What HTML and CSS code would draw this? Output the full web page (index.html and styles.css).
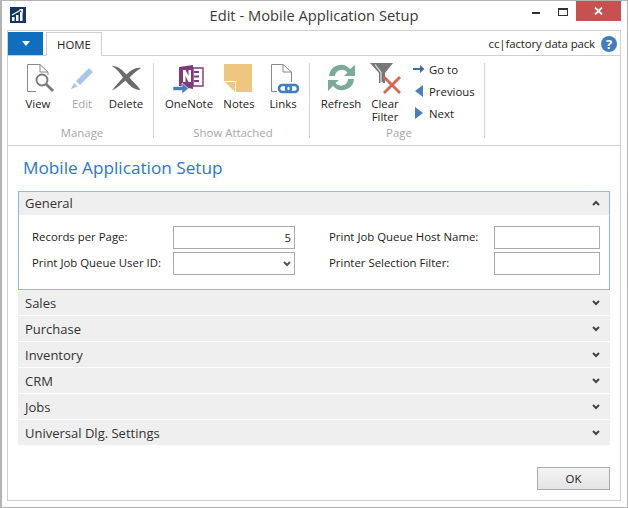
FILE: index.html
```html
<!DOCTYPE html>
<html lang="en">
<head>
    <meta charset="UTF-8">
    <title>Edit - Mobile Application Setup</title>
    <link rel="stylesheet" href="styles.css">
</head>
<body>
<div class="window">
    <header class="titlebar">
        <svg class="app-icon" width="16" height="16" viewBox="0 0 16 16">
            <rect width="16" height="16" fill="#14365f"/>
            <path d="M2 14V10H4.500V14ZM6 14V8H8.500V14ZM10 14V5H12.500V14Z" fill="#fff"/>
            <path d="M2 8L10 3.500" stroke="#fff" stroke-width="1.200" fill="none"/>
            <path d="M9 2H13V6Z" fill="#fff"/>
        </svg>
        <div class="title">Edit - Mobile Application Setup</div>
        <div class="win-controls">
            <svg class="win-min" width="8" height="2"><rect width="8" height="2" fill="#333"/></svg>
            <svg class="win-max" width="10" height="8"><rect x="0.500" y="0.500" width="9" height="7" fill="none" stroke="#333"/><rect width="10" height="2" fill="#333"/></svg>
            <div class="win-close">
                <svg width="9" height="8" viewBox="0 0 9 8"><path d="M1 0.500L8 7.500M8 0.500L1 7.500" stroke="#fff" stroke-width="1.800"/></svg>
            </div>
        </div>
    </header>

    <div class="panel">
        <div class="tabs">
            <button class="app-menu"><span class="caret"></span></button>
            <div class="tab">HOME</div>
            <div class="company">cc|factory data pack</div>
            <svg class="help" width="16" height="16" viewBox="0 0 16 16">
                <circle cx="8" cy="8" r="8" fill="#3f7fc1"/>
                <text x="8" y="12.500" text-anchor="middle" class="help-mark">?</text>
            </svg>
        </div>

        <div class="ribbon">
            <section class="group group-manage">
                <div class="group-items">
                    <div class="action w44">
                        <svg width="32" height="30" viewBox="0 0 32 30">
                            <path d="M5.500 28.500V1.500H18L26 9V12M18 1.500V9H26M5.500 28.500H14" fill="none" stroke="#8a8a8a"/>
                            <circle cx="20" cy="17" r="5.500" fill="#fff" stroke="#777" stroke-width="1.800"/>
                            <path d="M24 21L31 28" stroke="#777" stroke-width="2.600"/>
                        </svg>
                        <span>View</span>
                    </div>
                    <div class="action w44 off">
                        <svg width="30" height="30" viewBox="0 0 30 30">
                            <path d="M9 18L22 5L26 9L13 22Z" fill="#a9c6e3"/>
                            <path d="M7 20L10.500 23.500L4 26Z" fill="#a9c6e3"/>
                        </svg>
                        <span>Edit</span>
                    </div>
                    <div class="action w44">
                        <svg width="30" height="30" viewBox="0 0 30 30">
                            <path d="M1 3C8 3 12 8 15.500 11.500C20 7 25 4 30 5C25 8 21 12 18.500 14.500C22 19 26 22 29.500 27C23 27 18 22 14.500 17.500C10 21 6 25 1 27.500C4 23 9 18 12 14.500C9 10 6 6 1 3Z" fill="#6b6b6b"/>
                        </svg>
                        <span>Delete</span>
                    </div>
                </div>
                <div class="group-label">Manage</div>
            </section>

            <section class="group group-attached">
                <div class="group-items">
                    <div class="action w50">
                        <svg width="32" height="30" viewBox="0 0 32 30">
                            <path d="M6 4L20 2V26L6 23Z" fill="#80397b"/>
                            <path d="M20 5H30V23H20Z" fill="none" stroke="#80397b" stroke-width="1.400"/>
                            <path d="M21 8H26V10H21ZM21 12.500H26V14.500H21ZM21 17H26V19H21Z" fill="#80397b"/>
                            <path d="M10 19V7H12.500L15.500 13V7H18V19H15.500L12.500 13V19Z" fill="#fff"/>
                            <path d="M0 23.500H9V20L15.500 25.500L9 31V27.500H0Z" fill="#4a7fb5" stroke="#fff" stroke-width="0.600"/>
                        </svg>
                        <span>OneNote</span>
                    </div>
                    <div class="action w50">
                        <svg width="28" height="30" viewBox="1 0 28 30">
                            <path d="M0 1H28V29H11L0 18Z" fill="#edc77f"/>
                            <path d="M0.500 18.500H11.500V29" fill="none" stroke="#fff"/>
                        </svg>
                        <span>Notes</span>
                    </div>
                    <div class="action w38">
                        <svg width="30" height="30" viewBox="0 0 30 30">
                            <path d="M3.500 28.500V1.500H15L23.500 9V19M15 1.500V9H23.500M3.500 28.500H9" fill="none" stroke="#8a8a8a"/>
                            <rect x="11" y="22" width="12" height="7" rx="3.500" fill="#fff" stroke="#3f7fc1" stroke-width="2.600"/>
                            <rect x="18" y="22" width="12" height="7" rx="3.500" fill="none" stroke="#3f7fc1" stroke-width="2.600"/>
                        </svg>
                        <span>Links</span>
                    </div>
                </div>
                <div class="group-label">Show Attached</div>
            </section>

            <section class="group group-page">
                <div class="group-items">
                    <div class="action w44">
                        <svg width="30" height="30" viewBox="0 0 30 30">
                            <path d="M3 13A12 12 0 0 1 24 6L29 2V13H18L21.500 9.500A7 7 0 0 0 9 13Z" fill="#7bab98"/>
                            <path d="M28 16A12 12 0 0 1 7 23L2 28V17H13L9.500 20A7 7 0 0 0 22 16Z" fill="#7bab98"/>
                        </svg>
                        <span>Refresh</span>
                    </div>
                    <div class="action w44">
                        <svg width="34" height="30" viewBox="0 0 34 30">
                            <path d="M2 0H25L17 10V20H11V10Z" fill="#777"/>
                            <path d="M7 1.500L13 9.500V19.500H15" fill="none" stroke="#e4e4e4" stroke-width="1.200"/>
                            <path d="M16 14L32 30M32 14L16 30" stroke="#d8654c" stroke-width="2.800"/>
                        </svg>
                        <span>Clear<br>Filter</span>
                    </div>
                    <ul class="small-actions">
                        <li>
                            <svg width="12" height="10" viewBox="0 0 12 10"><path d="M0 4H7V1L11.500 5L7 9V6H0Z" fill="#3f6fa8"/></svg>
                            <span>Go to</span>
                        </li>
                        <li>
                            <svg width="12" height="14" viewBox="0 0 12 14"><path d="M10 1V13L2 7Z" fill="#4a7fb5"/></svg>
                            <span>Previous</span>
                        </li>
                        <li>
                            <svg width="12" height="14" viewBox="0 0 12 14"><path d="M2 1V13L10 7Z" fill="#4a7fb5"/></svg>
                            <span>Next</span>
                        </li>
                    </ul>
                </div>
                <div class="group-label">Page</div>
            </section>
        </div>

        <main class="content">
            <h1 class="page-title">Mobile Application Setup</h1>

            <section class="fasttab open">
                <div class="fasttab-head">
                    <span>General</span>
                    <svg class="chev" width="8" height="6" viewBox="0 0 8 6"><path d="M1 5L4 2L7 5" fill="none" stroke="#444" stroke-width="2"/></svg>
                </div>
                <div class="fields">
                    <div class="field-col">
                        <div class="field">
                            <label>Records per Page:</label>
                            <div class="input input-num">5</div>
                        </div>
                        <div class="field">
                            <label>Print Job Queue User ID:</label>
                            <div class="input input-select">
                                <svg class="chev" width="8" height="6" viewBox="0 0 8 6"><path d="M1 1L4 4L7 1" fill="none" stroke="#555" stroke-width="2"/></svg>
                            </div>
                        </div>
                    </div>
                    <div class="field-col col-right">
                        <div class="field">
                            <label>Print Job Queue Host Name:</label>
                            <div class="input"></div>
                        </div>
                        <div class="field">
                            <label>Printer Selection Filter:</label>
                            <div class="input"></div>
                        </div>
                    </div>
                </div>
            </section>

            <section class="fasttab"><div class="fasttab-head"><span>Sales</span><svg class="chev" width="8" height="6" viewBox="0 0 8 6"><path d="M1 1L4 4L7 1" fill="none" stroke="#444" stroke-width="2"/></svg></div></section>
            <section class="fasttab"><div class="fasttab-head"><span>Purchase</span><svg class="chev" width="8" height="6" viewBox="0 0 8 6"><path d="M1 1L4 4L7 1" fill="none" stroke="#444" stroke-width="2"/></svg></div></section>
            <section class="fasttab"><div class="fasttab-head"><span>Inventory</span><svg class="chev" width="8" height="6" viewBox="0 0 8 6"><path d="M1 1L4 4L7 1" fill="none" stroke="#444" stroke-width="2"/></svg></div></section>
            <section class="fasttab"><div class="fasttab-head"><span>CRM</span><svg class="chev" width="8" height="6" viewBox="0 0 8 6"><path d="M1 1L4 4L7 1" fill="none" stroke="#444" stroke-width="2"/></svg></div></section>
            <section class="fasttab"><div class="fasttab-head"><span>Jobs</span><svg class="chev" width="8" height="6" viewBox="0 0 8 6"><path d="M1 1L4 4L7 1" fill="none" stroke="#444" stroke-width="2"/></svg></div></section>
            <section class="fasttab"><div class="fasttab-head"><span>Universal Dlg. Settings</span><svg class="chev" width="8" height="6" viewBox="0 0 8 6"><path d="M1 1L4 4L7 1" fill="none" stroke="#444" stroke-width="2"/></svg></div></section>

            <div class="footer">
                <button class="ok">OK</button>
            </div>
        </main>
    </div>
</div>
</body>
</html>
```

FILE: styles.css
```css
* {
    box-sizing: border-box;
}
html, body {
    margin: 0;
    padding: 0;
}
body {
    font-family: "Open Sans", "Noto Sans", sans-serif;
    font-size: 11.4px;
    color: #222;
    background: #fff;
}
.window {
    width: 628px;
    height: 508px;
    border: 1px solid #b4b4b4;
    border-left-width: 2px;
    background: #fff;
    display: flex;
    flex-direction: column;
    padding: 0 6px 6px 5px;
}

/* title bar */
.titlebar {
    height: 29px;
    display: flex;
    align-items: flex-start;
    position: relative;
}
.app-icon {
    margin: 6px 0 0 3px;
}
.title {
    position: absolute;
    left: 0;
    right: 0;
    top: 4px;
    text-align: center;
    font-size: 14.7px;
    color: #3a3a3a;
    line-height: 20px;
}
.win-controls {
    margin-left: auto;
    display: flex;
    align-items: flex-start;
    position: relative;
}
.win-min {
    margin: 11px 18px 0 0;
}
.win-max {
    margin: 7px 8px 0 0;
}
.win-close {
    width: 45px;
    height: 20px;
    background: #c75050;
    display: flex;
    align-items: center;
    justify-content: center;
}

/* main panel */
.panel {
    flex: 1;
    border: 1px solid #cfcfcf;
    display: flex;
    flex-direction: column;
    min-height: 0;
}
.tabs {
    height: 25px;
    display: flex;
    align-items: flex-start;
    padding: 1px 3px 0 0;
    border-bottom: 1px solid #cfcfcf;
}
.app-menu {
    width: 35px;
    height: 23px;
    background: #106ebe;
    border: 0;
    padding: 0;
    display: flex;
    align-items: center;
    justify-content: center;
}
.caret {
    width: 0;
    height: 0;
    border-left: 4px solid transparent;
    border-right: 4px solid transparent;
    border-top: 5px solid #fff;
}
.tab {
    width: 56px;
    height: 24px;
    margin-left: 3px;
    border: 1px solid #cfcfcf;
    border-bottom: 0;
    background: #fff;
    text-align: center;
    line-height: 24px;
}
.company {
    margin-left: auto;
    line-height: 24px;
    margin-right: 6px;
    letter-spacing: -0.1px;
}
.help {
    margin-top: 4px;
}
.help-mark {
    font-family: "Open Sans", sans-serif;
    font-size: 13px;
    font-weight: 700;
    fill: #fff;
}

/* ribbon */
.ribbon {
    height: 90px;
    display: flex;
    border-bottom: 1px solid #cfcfcf;
    padding: 7px 0 0 8px;
}
.group {
    height: 75px;
    display: flex;
    flex-direction: column;
    border-right: 1px solid #d4d4d4;
}
.group-manage {
    width: 138px;
    padding-right: 5px;
}
.group-attached {
    width: 156px;
    padding: 0 7px 0 10px;
}
.group-page {
    width: 175px;
    padding: 0 5px 0 9px;
}
.group-items {
    height: 64px;
    display: flex;
    align-items: flex-start;
}
.group-label {
    height: 11px;
    line-height: 11px;
    text-align: center;
    color: #a6a6a6;
}
.action {
    display: flex;
    flex-direction: column;
    align-items: center;
    text-align: center;
    line-height: 13px;
}
.action svg {
    height: 30px;
    margin-bottom: 4px;
    overflow: visible;
}
.action.off {
    color: #a6a6a6;
}
.w38 { width: 38px; }
.w44 { width: 44px; }
.w50 { width: 50px; }
.small-actions {
    list-style: none;
    margin: -5px 0 0 6px;
    padding: 0;
}
.small-actions li {
    height: 22px;
    display: flex;
    align-items: center;
    gap: 4px;
}

/* page content */
.content {
    flex: 1;
    padding: 0 10px;
    display: flex;
    flex-direction: column;
}
.page-title {
    margin: 0;
    height: 45px;
    padding: 10px 0 0 5px;
    font-size: 17.2px;
    line-height: 24px;
    font-weight: 400;
    color: #2a78c6;
}
.fasttab {
    margin-bottom: 1px;
}
.fasttab-head {
    height: 25px;
    background: #efefef;
    display: flex;
    align-items: center;
    justify-content: space-between;
    padding: 0 10px 0 7px;
    font-size: 13px;
    color: #333;
}
.fasttab.open {
    border: 1px solid #8db9ee;
    margin-bottom: 0;
    height: 99px;
}
.fasttab.open .fasttab-head {
    height: 23px;
    padding: 0 9px 1px 6px;
}
.fields {
    display: flex;
    padding: 11px 9px 0 13px;
    justify-content: space-between;
}
.field-col {
    display: flex;
    flex-direction: column;
    gap: 3px;
    width: 263px;
}
.col-right {
    width: 271px;
}
.field {
    height: 23px;
    display: flex;
    align-items: center;
    justify-content: space-between;
}
.field label {
    padding-bottom: 2px;
}
.input {
    width: 106px;
    height: 23px;
    border: 1px solid #ababab;
    background: #fff;
    padding: 0 3px;
    line-height: 21px;
    display: flex;
    align-items: center;
    justify-content: flex-end;
}
.field-col:first-child .input {
    width: 122px;
}
.footer {
    margin-top: 21px;
    display: flex;
    justify-content: flex-end;
}
.ok {
    width: 73px;
    height: 23px;
    border: 1px solid #ababab;
    background: linear-gradient(#f4f4f4, #e4e4e4);
    font: inherit;
    color: #222;
    padding: 0;
}
```
